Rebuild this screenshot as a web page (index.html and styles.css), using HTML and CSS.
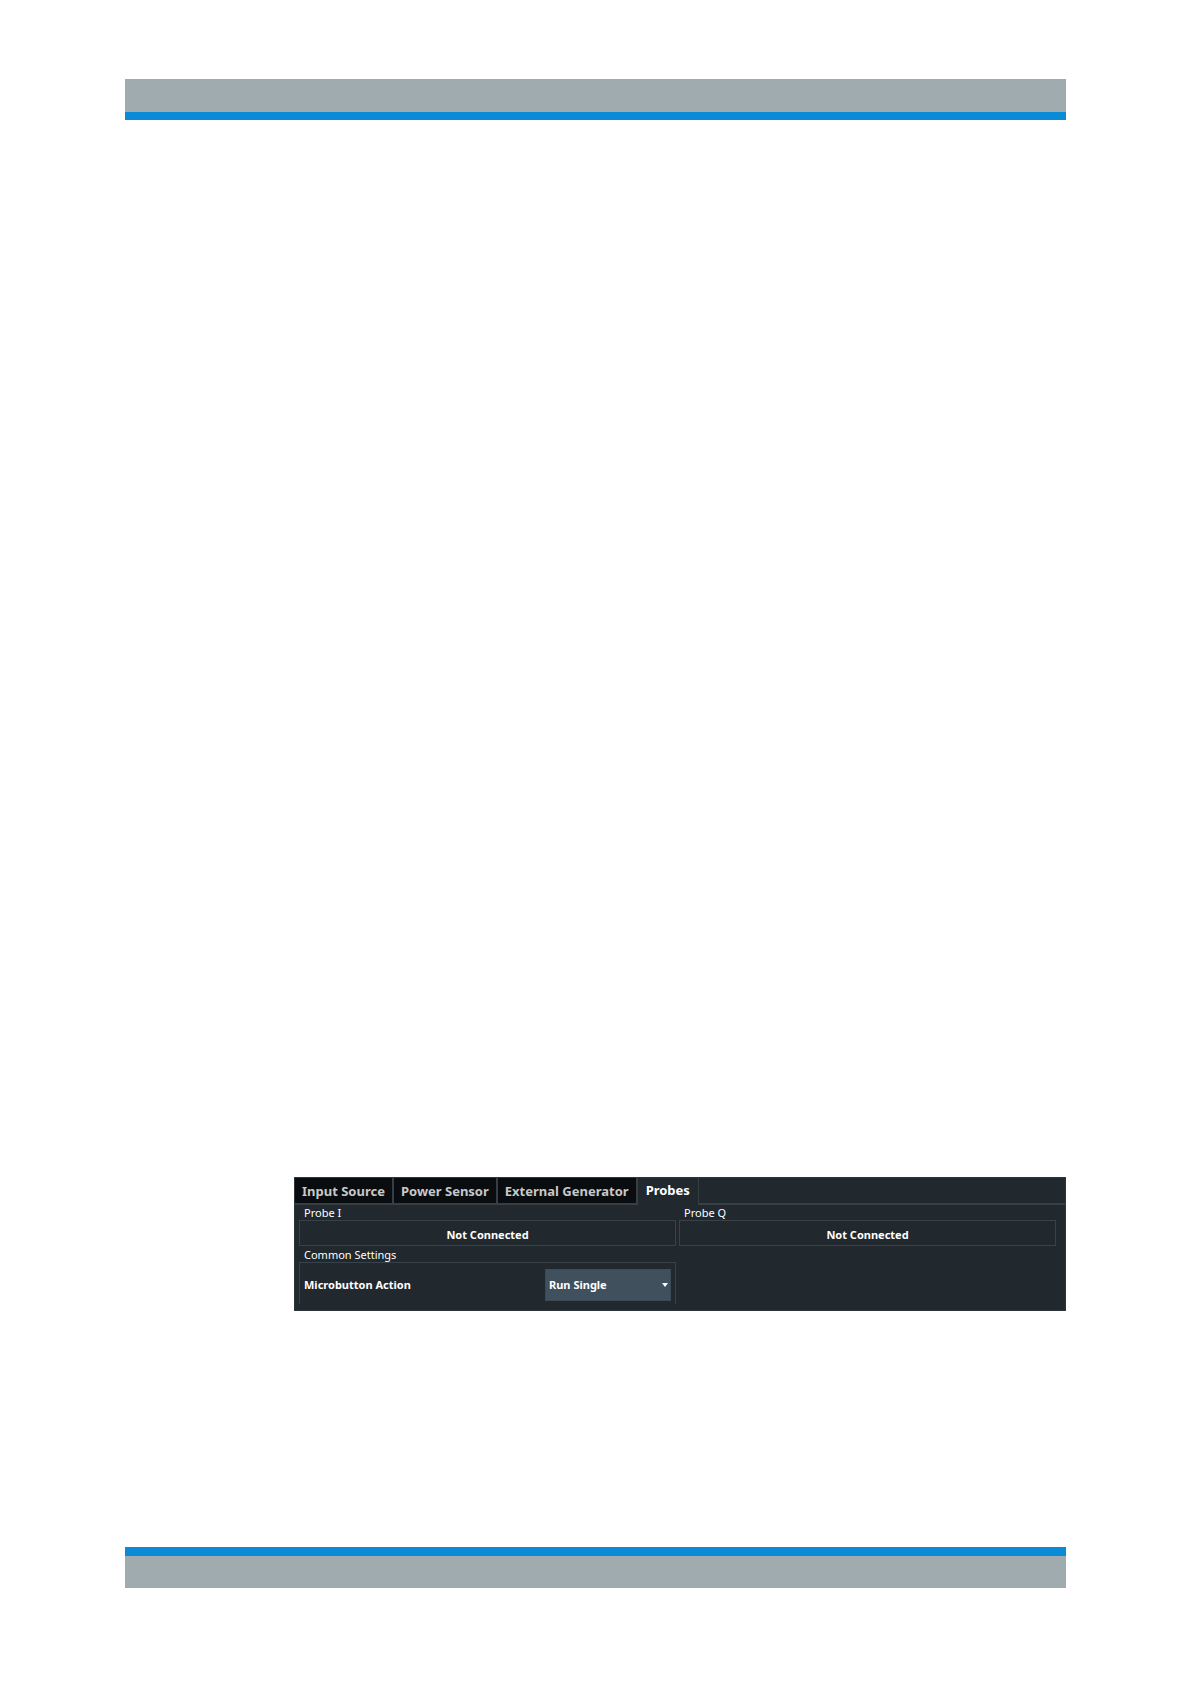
FILE: index.html
```html
<!DOCTYPE html>
<html lang="en">
<head>
  <meta charset="UTF-8">
  <title>Probes</title>
  <meta name="viewport" content="width=device-width, initial-scale=1.0">
  <link rel="stylesheet" href="styles.css">
</head>
<body>
  <header class="bar bar-top"></header>

  <main class="content">
    <section class="dialog">
      <nav class="tabs">
        <button class="tab" type="button">Input Source</button>
        <button class="tab" type="button">Power Sensor</button>
        <button class="tab" type="button">External Generator</button>
        <button class="tab active" type="button">Probes</button>
      </nav>

      <div class="panel">
        <div class="group">
          <h2>Probe I</h2>
          <div class="status">Not Connected</div>
        </div>
        <div class="group">
          <h2>Probe Q</h2>
          <div class="status">Not Connected</div>
        </div>
        <div class="group">
          <h2>Common Settings</h2>
          <div class="setting">
            <label for="microbutton">Microbutton Action</label>
            <div class="select-wrap">
              <select id="microbutton">
                <option>Run Single</option>
              </select>
              <svg class="arrow" viewBox="0 0 6 4" aria-hidden="true"><path d="M0 0h6L3 4z"/></svg>
            </div>
          </div>
        </div>
      </div>
    </section>
  </main>

  <footer class="bar bar-bottom"></footer>
</body>
</html>
```
FILE: styles.css
```css
* {
  box-sizing: border-box;
}
body {
  display: flex;
  flex-direction: column;
  min-height: 100vh;
  margin: 0;
  padding: 79px 125px 96px;
  background: #fff;
  color: #fff;
  font-family: "Noto Sans", Tahoma, sans-serif;
  font-size: 11px;
}
.bar {
  height: 41px;
  background: #a0abb0;
}
.bar-top {
  border-bottom: 8px solid #0b8ad5;
}
.bar-bottom {
  border-top: 9px solid #0b8ad5;
}
.content {
  display: flex;
  flex: 1;
  flex-direction: column;
  justify-content: flex-end;
  padding: 0 0 236px 169px;
}
.dialog {
  background: #21282e;
  border: 1px solid #2c363b;
}
.tabs {
  display: flex;
  height: 27px;
  border-bottom: 2px solid #353f45;
}
.tab {
  height: 25px;
  padding: 0 7px;
  border: 0;
  border-right: 2px solid #353f45;
  background: #0a0d10;
  color: #c8c8c8;
  font: bold 13px/24px "Noto Sans", Tahoma, sans-serif;
}
.tab.active {
  height: 27px;
  padding: 0 8px 4px;
  border-right-width: 1px;
  background: #21282e;
  color: #fff;
}
.panel {
  display: grid;
  grid-template-columns: 1fr 1fr;
  gap: 1px 3px;
  padding: 0 9px 6px 4px;
}
h2 {
  margin: 0;
  padding: 0 5px;
  font-size: 11px;
  font-weight: normal;
  line-height: 15px;
}
.status {
  height: 26px;
  border: 1px solid #37424a;
  font-weight: bold;
  line-height: 27px;
  text-align: center;
}
.setting {
  display: flex;
  align-items: center;
  justify-content: space-between;
  height: 42px;
  padding: 2px 4px 0;
  border: 1px solid #37424a;
  border-bottom: 0;
  font-weight: bold;
}
.select-wrap {
  position: relative;
}
select {
  display: block;
  width: 126px;
  height: 32px;
  padding: 0 3px;
  border: 1px solid #3b4a55;
  border-radius: 0;
  background: #40505d;
  color: #fff;
  font: bold 11px "Noto Sans", Tahoma, sans-serif;
  appearance: none;
}
.arrow {
  position: absolute;
  top: 14px;
  right: 3px;
  width: 6px;
  height: 4px;
  fill: #fff;
  pointer-events: none;
}
```
